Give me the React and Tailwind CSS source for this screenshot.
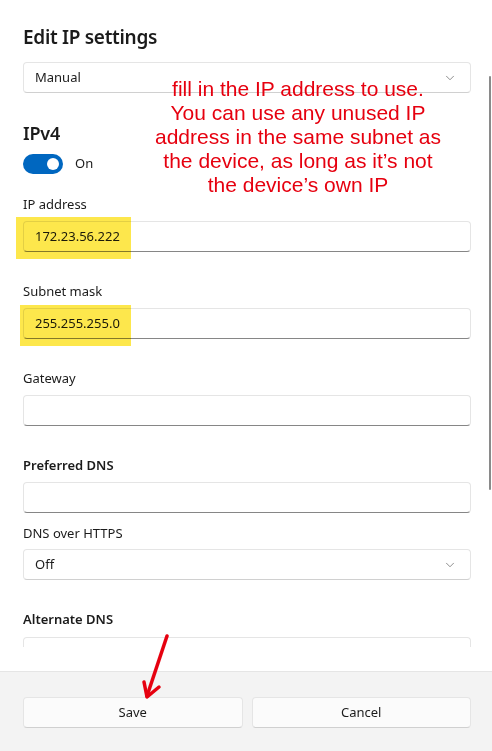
import React from 'react';
import { ChevronDown } from 'lucide-react';

const Label = ({ children, bold, className = '' }) => (
  <div
    className={`h-[20px] text-[13px] leading-[20px] text-[#1b1b1b] ${bold ? 'font-semibold' : ''} ${className}`}>
    {children}
  </div>
);

const TextBox = ({ value, className = '' }) => (
  <div
    className={`h-[31px] flex items-center px-[11px] rounded-[4px] border border-[#e5e5e5] border-b-[#868686] bg-white text-[13px] text-[#1b1b1b] ${className}`}>
    {value}
  </div>
);

const Select = ({ value, className = '' }) => (
  <div
    className={`h-[31px] flex items-center justify-between pl-[11px] pr-[13px] rounded-[4px] border border-[#e5e5e5] border-b-[#d0d0d0] bg-white text-[13px] text-[#1b1b1b] ${className}`}>
    <span>{value}</span>
    <ChevronDown size={14} strokeWidth={1.2} className="text-[#5f5f5f]" />
  </div>
);

const Highlight = ({ className }) => (
  <div className={`absolute bg-[#fde74c] mix-blend-multiply ${className}`} />
);

export default function App() {
  return (
    <div className="relative w-[492px] h-[751px] bg-white overflow-hidden font-['Noto_Sans','Open_Sans',sans-serif]">
      <div className="h-[671px] overflow-hidden pl-[23px] pr-[21px] pt-[23px]">
        <h1 className="text-[19px] leading-[28px] tracking-[-0.3px] font-semibold text-[#1b1b1b]">Edit IP settings</h1>
        <Select value="Manual" className="mt-[11px]" />

        <h2 className="mt-[27px] text-[18px] leading-[26px] tracking-[-0.2px] font-semibold text-[#1b1b1b]">IPv4</h2>
        <div className="mt-[8px] flex items-center">
          <div className="w-[40px] h-[20px] rounded-full bg-[#0067c0] flex items-center justify-end pr-[4px]">
            <div className="w-[12px] h-[12px] rounded-full bg-white" />
          </div>
          <span className="ml-[12px] text-[13px] text-[#1b1b1b]">On</span>
        </div>

        <Label className="mt-[20px]">IP address</Label>
        <TextBox value="172.23.56.222" className="mt-[7px]" />

        <Label className="mt-[29px]">Subnet mask</Label>
        <TextBox value="255.255.255.0" className="mt-[7px]" />

        <Label className="mt-[29px]">Gateway</Label>
        <TextBox className="mt-[7px]" />

        <Label bold className="mt-[29px]">Preferred DNS</Label>
        <TextBox className="mt-[7px]" />

        <Label className="mt-[10px]">DNS over HTTPS</Label>
        <Select value="Off" className="mt-[6px]" />

        <Label bold className="mt-[29px]">Alternate DNS</Label>
        <div className="mt-[8px] h-[10px] rounded-t-[4px] border border-b-0 border-[#e5e5e5]" />
      </div>

      <div className="h-[80px] bg-[#f3f3f3] border-t border-[#e5e5e5] pl-[23px] pr-[21px] pt-[25px] flex gap-[9px]">
        <button className="flex-1 h-[31px] rounded-[4px] bg-[#fbfbfb] border border-[#e5e5e5] border-b-[#d0d0d0] text-[13px] text-[#1b1b1b]">
          Save
        </button>
        <button className="flex-1 h-[31px] rounded-[4px] bg-[#fbfbfb] border border-[#e5e5e5] border-b-[#d0d0d0] text-[13px] text-[#1b1b1b]">
          Cancel
        </button>
      </div>

      {/* scrollbar */}
      <div className="absolute left-[489px] top-[76px] w-[2px] h-[414px] rounded-full bg-[#8a8a8a]" />

      {/* highlights */}
      <Highlight className="left-[16px] top-[217px] w-[115px] h-[42px]" />
      <Highlight className="left-[20px] top-[305px] w-[111px] h-[41px]" />

      {/* annotation */}
      <div className="absolute left-[110px] top-[77px] w-[376px] text-center text-[21px] leading-[24px] text-[#e6000f] font-['Liberation_Sans',Arial,sans-serif]">
        fill in the IP address to use.
        <br />
        You can use any unused IP
        <br />
        address in the same subnet as
        <br />
        the device, as long as it’s not
        <br />
        the device’s own IP
      </div>

      <svg className="absolute left-0 top-0 pointer-events-none" width="492" height="751">
        <g stroke="#e6000f" strokeWidth="3.5" strokeLinecap="round" fill="none">
          <line x1="167" y1="636" x2="147" y2="696" />
          <polyline points="144,682 147,697 159,687" strokeLinejoin="round" />
        </g>
      </svg>
    </div>
  );
}
